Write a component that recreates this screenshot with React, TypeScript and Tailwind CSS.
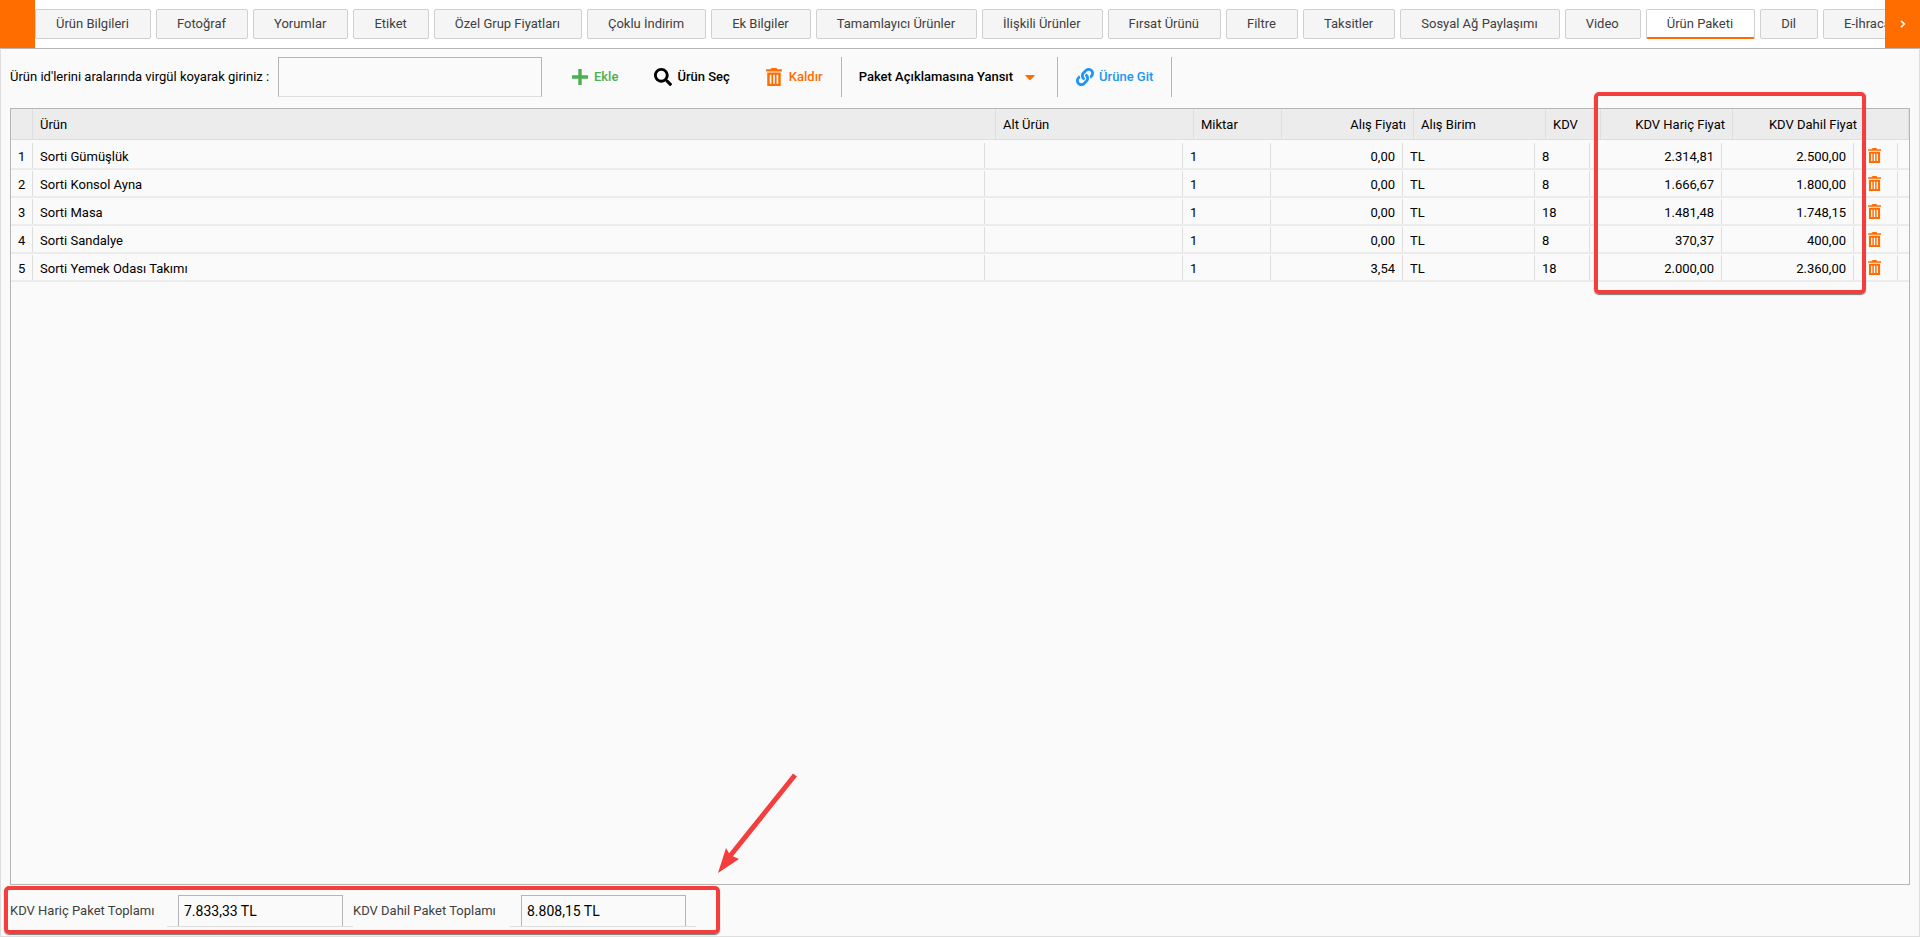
import type { ReactNode } from 'react';
import { FaCaretDown, FaLink, FaSearch } from 'react-icons/fa';

const tabs = [
  'Ürün Bilgileri',
  'Fotoğraf',
  'Yorumlar',
  'Etiket',
  'Özel Grup Fiyatları',
  'Çoklu İndirim',
  'Ek Bilgiler',
  'Tamamlayıcı Ürünler',
  'İlişkili Ürünler',
  'Fırsat Ürünü',
  'Filtre',
  'Taksitler',
  'Sosyal Ağ Paylaşımı',
  'Video',
  'Ürün Paketi',
  'Dil',
  'E-İhracat',
];

const activeTab = 'Ürün Paketi';

const products = [
  { name: 'Sorti Gümüşlük', quantity: 1, cost: '0,00', currency: 'TL', vat: 8, net: '2.314,81', gross: '2.500,00' },
  { name: 'Sorti Konsol Ayna', quantity: 1, cost: '0,00', currency: 'TL', vat: 8, net: '1.666,67', gross: '1.800,00' },
  { name: 'Sorti Masa', quantity: 1, cost: '0,00', currency: 'TL', vat: 18, net: '1.481,48', gross: '1.748,15' },
  { name: 'Sorti Sandalye', quantity: 1, cost: '0,00', currency: 'TL', vat: 8, net: '370,37', gross: '400,00' },
  { name: 'Sorti Yemek Odası Takımı', quantity: 1, cost: '3,54', currency: 'TL', vat: 18, net: '2.000,00', gross: '2.360,00' },
];

function PlusIcon({ className }: { className: string }) {
  return (
    <svg viewBox="0 0 16 16" className={className} fill="currentColor" aria-hidden="true">
      <path d="M6.3 0h3.4v6.3H16v3.4H9.7V16H6.3V9.7H0V6.3h6.3z" />
    </svg>
  );
}

function TrashIcon({ className }: { className: string }) {
  return (
    <svg viewBox="0 0 14 16" className={className} fill="currentColor" aria-hidden="true">
      <path d="M0 1.2h3.8L5 0h4l1.2 1.2H14V3H0z" />
      <path fillRule="evenodd" d="M1 4h12v12H1zM3.2 6v8h1.5V6zM6.25 6v8h1.5V6zM9.3 6v8h1.5V6z" />
    </svg>
  );
}

function HeaderCell({ children, right }: { children?: ReactNode; right?: boolean }) {
  return (
    <th
      scope="col"
      className={`border-r border-[#dedede] px-[7px] font-normal leading-8 ${right ? 'text-right' : 'text-left'}`}
    >
      {children}
    </th>
  );
}

function Cell({ children, right }: { children?: ReactNode; right?: boolean }) {
  return (
    <td className={`mt-px border-r border-[#dedede] px-[7px] leading-[27px] ${right ? 'text-right' : 'text-left'}`}>
      {children}
    </td>
  );
}

function Total({ id, label, value }: { id: string; label: string; value: string }) {
  return (
    <div className="flex h-8 items-stretch">
      <label htmlFor={id} className="w-[157px] leading-8 text-[#404040]">
        {label}
      </label>
      <div className="border-b border-[#dedede] pl-[11px] pr-[10px]">
        <input
          id={id}
          readOnly
          defaultValue={value}
          className="block h-full w-[165px] border border-b-0 border-[#b5b5b5] px-[5px] text-sm text-black outline-none"
        />
      </div>
    </div>
  );
}

export default function App() {
  return (
    <div className="flex h-screen flex-col overflow-hidden bg-[#fafafa] font-[Roboto,sans-serif] text-[13px] text-black">
      {/* Tabs */}
      <nav className="flex h-12 shrink-0 bg-white">
        <button type="button" aria-label="Önceki sekmeler" className="w-[35px] shrink-0 bg-[#ff6c00]" />
        <div className="flex min-w-0 flex-1 items-center gap-[5px] overflow-hidden">
          {tabs.map((tab) => (
            <button
              key={tab}
              type="button"
              className={`h-[30px] shrink-0 rounded-[2px] border pl-5 pr-[21px] text-[#404040] ${
                tab === activeTab
                  ? 'border-[#d0d0d0] border-b-2 border-b-[#ff6c00] bg-white'
                  : 'border-[#d0d0d0] bg-[#f5f5f5]'
              }`}
            >
              {tab}
            </button>
          ))}
        </div>
        <button
          type="button"
          aria-label="Sonraki sekmeler"
          className="flex w-[35px] shrink-0 items-center justify-center bg-[#ff6c00] text-white"
        >
          <svg viewBox="0 0 6 8" className="h-2 w-[6px]" fill="none" stroke="currentColor" strokeWidth="1.6" aria-hidden="true">
            <path d="M1 .8 4.4 4 1 7.2" />
          </svg>
        </button>
      </nav>

      <main className="flex min-h-0 flex-1 flex-col border border-[#dedede] border-t-[#b5b5b5] px-[9px]">
        {/* Toolbar */}
        <div className="mt-2 flex h-10 shrink-0 items-center">
          <label htmlFor="product-ids" className="w-[268px]">
            Ürün id'lerini aralarında virgül koyarak giriniz :
          </label>
          <input
            id="product-ids"
            className="h-10 w-[264px] border border-[#b5b5b5] border-b-[#dedede] px-2 outline-none"
          />
          <button type="button" className="ml-[30px] flex items-center gap-[6px] font-medium text-[#4caf50]">
            <PlusIcon className="size-4" />
            Ekle
          </button>
          <button type="button" className="ml-9 flex items-center gap-[5px] font-medium">
            <FaSearch className="size-[18px]" />
            Ürün Seç
          </button>
          <button type="button" className="ml-9 flex items-center gap-[7px] font-medium text-[#ff6c00]">
            <TrashIcon className="h-[18px] w-4" />
            Kaldır
          </button>
          <div className="ml-[18px] flex h-full items-center border-x border-[#b5b5b5] pl-[17px] pr-[19px]">
            <button type="button" className="flex items-center gap-[9px] font-medium">
              Paket Açıklamasına Yansıt
              <FaCaretDown className="size-4 text-[#ff6c00]" />
            </button>
          </div>
          <div className="flex h-full items-center border-r border-[#b5b5b5] px-[18px]">
            <a href="#urun" className="flex items-center gap-[5px] font-medium text-[#2196f3]">
              <FaLink className="size-[18px]" />
              Ürüne Git
            </a>
          </div>
        </div>

        {/* Product grid */}
        <div className="mt-[11px] min-h-0 flex-1 border border-[#b5b5b5]">
          <table className="block">
            <thead className="block border-b border-[#dedede] bg-[#ececec]">
              <tr className="grid grid-cols-[22px_1fr_198px_88px_132px_132px_55px_132px_132px_44px] grid-rows-[30px]">
                <HeaderCell />
                <HeaderCell>Ürün</HeaderCell>
                <HeaderCell>Alt Ürün</HeaderCell>
                <HeaderCell>Miktar</HeaderCell>
                <HeaderCell right>Alış Fiyatı</HeaderCell>
                <HeaderCell>Alış Birim</HeaderCell>
                <HeaderCell>KDV</HeaderCell>
                <HeaderCell right>KDV Hariç Fiyat</HeaderCell>
                <HeaderCell right>KDV Dahil Fiyat</HeaderCell>
                <HeaderCell />
              </tr>
            </thead>
            <tbody className="block pt-[2px]">
              {products.map((product, index) => (
                <tr
                  key={product.name}
                  className="grid grid-cols-[22px_1fr_198px_88px_132px_132px_55px_132px_132px_44px_11px] grid-rows-[26px] border-b-2 border-[#ececec]"
                >
                  <Cell>{index + 1}</Cell>
                  <Cell>{product.name}</Cell>
                  <Cell />
                  <Cell>{product.quantity}</Cell>
                  <Cell right>{product.cost}</Cell>
                  <Cell>{product.currency}</Cell>
                  <Cell>{product.vat}</Cell>
                  <Cell right>{product.net}</Cell>
                  <Cell right>{product.gross}</Cell>
                  <td className="mt-px flex items-center border-r border-[#dedede] pl-[14px]">
                    <button type="button" aria-label={`${product.name} sil`} className="text-[#ff6c00]">
                      <TrashIcon className="h-[15px] w-[13px]" />
                    </button>
                  </td>
                </tr>
              ))}
            </tbody>
          </table>
        </div>

        {/* Totals */}
        <div className="flex shrink-0 pb-[9px] pt-[10px]">
          <Total id="net-total" label="KDV Hariç Paket Toplamı" value="7.833,33 TL" />
          <Total id="gross-total" label="KDV Dahil Paket Toplamı" value="8.808,15 TL" />
        </div>
      </main>

      {/* Highlights */}
      <div className="pointer-events-none absolute right-[54px] top-[92px] h-[202px] w-[272px] rounded-[5px] border-4 border-[#f43d3d] shadow-[0_1px_1px_#777]" />
      <div className="pointer-events-none absolute bottom-[3px] left-1 h-12 w-[716px] rounded-[5px] border-4 border-[#f43d3d] shadow-[0_1px_1px_#777]" />
      <svg viewBox="0 0 80 102" className="pointer-events-none absolute bottom-[63px] left-[717px] h-[102px] w-20" aria-hidden="true">
        <path d="M78 3 13 84" stroke="#f43d3d" strokeWidth="5" />
        <path d="M1 101 9 76 13 83 22 87z" fill="#f43d3d" />
      </svg>
    </div>
  );
}
